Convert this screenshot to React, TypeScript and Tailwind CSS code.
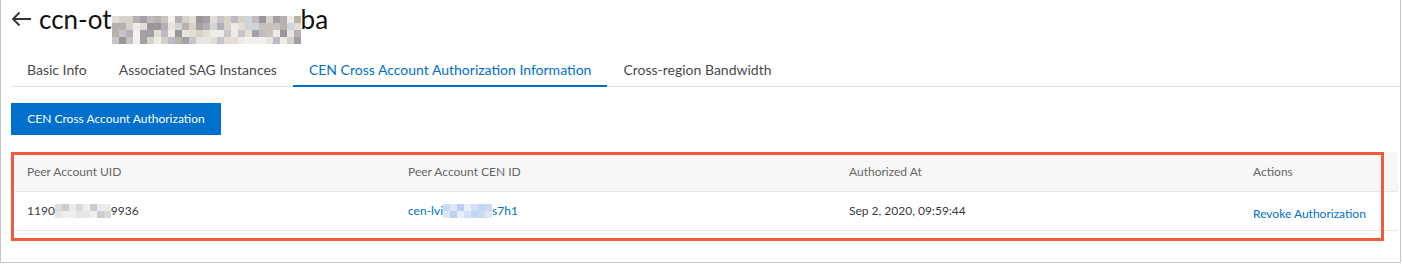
import React from "react";

const titlePalette = ["#c7c2bc", "#b3b1b4", "#d6d1c9", "#a4a1a6", "#e3ded6", "#c8c4ca", "#efebe6", "#9a979b", "#d0d4db", "#b9b2aa", "#e8e5e0", "#bfbbc2", "#f3f1ee"];
const grayPalette = ["#d9d9d9", "#e6e6e6", "#d2d2d2", "#eeeeee", "#dddddd", "#cbcbcb", "#ebebeb"];
const bluePalette = ["#ccdaf1", "#dde7f7", "#bccfee", "#e8effa", "#d3e0f5", "#c5d6f2"];

function Mosaic({ cols, rows, size, palette, seed }: { cols: number; rows: number; size: number; palette: string[]; seed: number }) {
  const cells: React.ReactNode[] = [];
  let s = seed;
  for (let r = 0; r < rows; r++) {
    for (let c = 0; c < cols; c++) {
      s = (s * 9301 + 49297) % 233280;
      const color = palette[s % palette.length];
      cells.push(<div key={r + "-" + c} style={{ width: size, height: size, background: color }} />);
    }
  }
  return (
    <div className="inline-grid" style={{ gridTemplateColumns: `repeat(${cols}, ${size}px)` }}>
      {cells}
    </div>
  );
}

export default function App() {
  const font = { fontFamily: '"Segoe UI", Lato, "Open Sans", sans-serif' };
  return (
    <div className="w-[1401px] h-[263px] border-l border-r border-b border-[#c6c6c6] bg-white overflow-hidden" style={font}>
      {/* Title */}
      <div className="h-[42px] pl-[10px] flex items-center">
        <svg width="21" height="16" viewBox="0 0 21 16" className="mr-[7px] mt-[-4px]">
          <path d="M20 8H2M8.5 1.5L2 8l6.5 6.5" fill="none" stroke="#333" strokeWidth="1.8" />
        </svg>
        <div className="flex items-center text-[26px] leading-[32px] text-[#111] mt-[-4px]">
          <span>ccn-ot</span>
          <span className="mt-[2px]">
            <Mosaic cols={27} rows={4} size={7} palette={titlePalette} seed={7} />
          </span>
          <span>ba</span>
        </div>
      </div>

      {/* Tabs */}
      <div className="ml-[10px] mt-[11px] h-[34px] border-b border-[#e3e3e3] flex text-[14px] text-[#4a4a4a]">
        <div className="px-4 flex items-center">Basic Info</div>
        <div className="px-4 flex items-center">Associated SAG Instances</div>
        <div className="px-4 flex items-center text-[#0070cc] relative">
          CEN Cross Account Authorization Information
          <div className="absolute left-0 right-0 bottom-[-1px] h-[2px] bg-[#0070cc]" />
        </div>
        <div className="px-4 flex items-center">Cross-region Bandwidth</div>
      </div>

      {/* Button */}
      <div className="ml-[10px] mt-[16px]">
        <button className="h-[32px] w-[210px] bg-[#0070cc] text-white text-[12px] flex items-center justify-center">
          CEN Cross Account Authorization
        </button>
      </div>

      {/* Table */}
      <div className="ml-[10px] mt-[17px] w-[1387px] relative text-[12px]">
        <div className="flex h-[40px] bg-[#f7f7f7] border-b border-[#e6e6e6] text-[#666]">
          <div className="w-[381px] pl-4 flex items-center">Peer Account UID</div>
          <div className="w-[441px] pl-4 flex items-center">Peer Account CEN ID</div>
          <div className="w-[404px] pl-4 flex items-center">Authorized At</div>
          <div className="flex-1 pl-4 flex items-center">Actions</div>
        </div>
        <div className="flex h-[39px] border-b border-[#e6e6e6] text-[#3a3a3a]">
          <div className="w-[381px] pl-4 flex items-center">
            <span>1190</span>
            <Mosaic cols={8} rows={2} size={7} palette={grayPalette} seed={3} />
            <span>9936</span>
          </div>
          <div className="w-[441px] pl-4 flex items-center text-[#0070cc]">
            <span>cen-lvi</span>
            <Mosaic cols={7} rows={2} size={7} palette={bluePalette} seed={11} />
            <span>s7h1</span>
          </div>
          <div className="w-[404px] pl-4 flex items-center">Sep 2, 2020, 09:59:44</div>
          <div className="flex-1 pl-4 flex items-center pt-[6px] text-[#0070cc]">Revoke Authorization</div>
        </div>
        <div className="absolute left-0 top-0 w-[1373px] h-[89px] border-[3px] border-[#ef5b3b] pointer-events-none" />
      </div>
    </div>
  );
}
